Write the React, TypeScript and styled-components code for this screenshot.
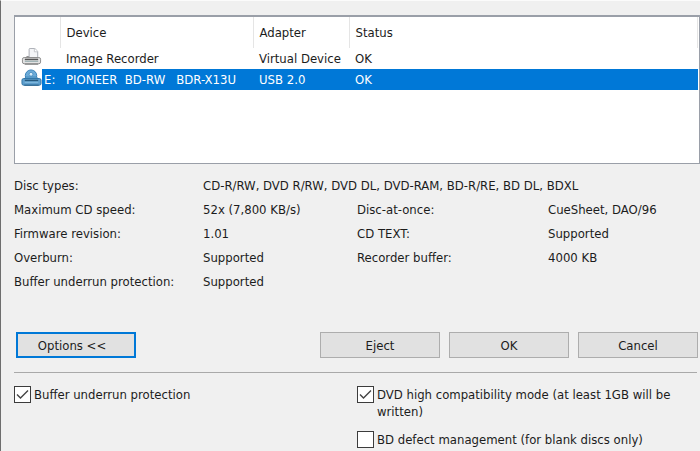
import React, { useId, useState } from "react";
import styled, { createGlobalStyle } from "styled-components";

const GlobalStyle = createGlobalStyle`
  *, *::before, *::after { box-sizing: border-box; }
  body {
    margin: 0;
    background: #f0f0f0;
    color: #1c1c1c;
    font-family: "DejaVu Sans Condensed", "DejaVu Sans", sans-serif;
    font-size: 13px;
    line-height: 17px;
  }
`;

const Dialog = styled.main`
  min-height: 100vh;
  padding: 14px 0 0 13px;
  border-top: 1px solid #fbfbfb;
  border-left: 1px solid #6e6e6e;
`;

const DeviceList = styled.div`
  height: 149px;
  padding-right: 1px;
  border: 1px solid #9a9fa8;
  border-top-width: 2px;
  background: #fff;
`;

const DeviceTable = styled.table`
  width: 100%;
  table-layout: fixed;
  border-collapse: collapse;
`;

const Column = styled.col<{ $width?: number }>`
  width: ${({ $width }) => ($width ? `${$width}px` : "auto")};
`;

const HeadCell = styled.th`
  height: 31px;
  padding: 0 0 0 6px;
  border-right: 1px solid #e5e5e5;
  font-weight: 400;
  text-align: left;
`;

const Cell = styled.td<{ $selected?: boolean }>`
  height: 21px;
  padding: 0 0 0 6px;
  overflow: hidden;
  white-space: pre;
  color: ${({ $selected }) => ($selected ? "#fff" : "inherit")};
  background: ${({ $selected }) => ($selected ? "#0078d7" : "transparent")};
`;

const DriveCell = styled.td`
  height: 21px;
  padding: 0;
`;

const Drive = styled.div`
  display: flex;
  height: 21px;
  padding-left: 6px;
`;

const DriveLetter = styled.span<{ $selected?: boolean }>`
  flex: 1;
  padding-left: 2px;
  line-height: 21px;
  color: #fff;
  background: ${({ $selected }) => ($selected ? "#0078d7" : "transparent")};
`;

const Properties = styled.dl`
  display: grid;
  grid-template-columns: 189fr 154fr 191fr 152fr;
  grid-auto-rows: 24px;
  align-items: center;
  margin: 9px 0 0;
  white-space: nowrap;
`;

const Term = styled.dt`
  grid-column: span 1;
`;

const Value = styled.dd<{ $span?: number }>`
  grid-column: span ${({ $span }) => $span ?? 1};
  margin: 0;
`;

const Actions = styled.div`
  display: flex;
  gap: 9px;
  margin: 39px 2px 0 2px;
`;

const Button = styled.button<{ $primary?: boolean }>`
  flex: 0 0 120px;
  height: 26px;
  margin: ${({ $primary }) => ($primary ? "0 auto 0 0" : "0")};
  padding: 0 ${({ $primary }) => ($primary ? "8px" : "0")} 0 0;
  border: ${({ $primary }) => ($primary ? "2px solid #0078d7" : "1px solid #adadad")};
  background: #e1e1e1;
  color: inherit;
  font: inherit;
`;

const Divider = styled.hr`
  height: 1px;
  margin: 14px 3px 13px 0;
  border: 0;
  background: #a9a9a9;
`;

const Options = styled.div`
  display: grid;
  grid-template-columns: 1fr 1fr;
  align-items: start;
`;

const OptionGroup = styled.div`
  display: grid;
  gap: 11px;
`;

const Option = styled.div`
  display: flex;
  gap: 3px;
  padding-right: 20px;
`;

const CheckFrame = styled.span`
  position: relative;
  flex: 0 0 17px;
  height: 17px;
`;

const CheckInput = styled.input`
  appearance: none;
  display: block;
  width: 17px;
  height: 17px;
  margin: 0;
  border: 1px solid #3c3c3c;
  background: #fff;
`;

const Tick = styled.svg`
  position: absolute;
  inset: 0;
  pointer-events: none;
`;

function PrinterIcon() {
  return (
    <svg width="21" height="20" viewBox="0 0 22 20" aria-hidden="true">
      <path d="M4.5 10.5 6 8.5h10l2.5 2.5" fill="#ddd" stroke="#888" />
      <path d="M8.5 10V1q0-1 1-1h5L17.5 3V10z" fill="#f4f5f7" stroke="#a7abb2" />
      <path d="M14 0v3.500h3.500" fill="#fff" stroke="#b7b9be" strokeWidth=".8" />
      <rect x="1.500" y="9.500" width="19" height="6.500" rx="1.800" fill="#e3e3e3" stroke="#8b8b8b" />
      <path d="M4 11.500h14" stroke="#555" strokeWidth="1.600" />
      <path d="M4 13.500h14" stroke="#9cb0b3" strokeWidth="1.200" />
      <path d="M4 16.500h14" stroke="#777" />
    </svg>
  );
}

function BurnerIcon() {
  return (
    <svg width="21" height="20" viewBox="0 0 22 20" aria-hidden="true">
      <circle cx="10.500" cy="6.500" r="6" fill="#6cabd8" stroke="#3680b8" />
      <circle cx="10.500" cy="5" r="2" fill="#d9edf9" stroke="#3e87bd" strokeWidth=".8" />
      <path d="M3 10.500 5 8h11.500l2 2.500z" fill="#75b0d9" stroke="#337db2" strokeWidth=".8" />
      <rect x="1" y="9.500" width="20" height="7" rx="1.800" fill="#5f9fcd" stroke="#2f73a6" />
      <path d="M4 11.500h14" stroke="#26597e" strokeWidth="1.500" />
      <path d="M4 13.500h14" stroke="#86bee2" />
      <path d="M3.500 16.500h15" stroke="#285f88" />
    </svg>
  );
}

function CheckOption({ text, initial = false }: { text: string; initial?: boolean }) {
  const id = useId();
  const [checked, setChecked] = useState(initial);
  return (
    <Option>
      <CheckFrame>
        <CheckInput
          id={id}
          type="checkbox"
          checked={checked}
          onChange={(event) => setChecked(event.target.checked)}
        />
        {checked && (
          <Tick width="17" height="17" viewBox="0 0 17 17" aria-hidden="true">
            <path d="M3 8.500 6.500 12 14 4.500" fill="none" stroke="#444" strokeWidth="1.400" />
          </Tick>
        )}
      </CheckFrame>
      <label htmlFor={id}>{text}</label>
    </Option>
  );
}

export default function App() {
  return (
    <>
      <GlobalStyle />
      <Dialog>
        <DeviceList>
          <DeviceTable>
            <colgroup>
              <Column $width={45} />
              <Column $width={193} />
              <Column $width={96} />
              <Column />
            </colgroup>
            <thead>
              <tr>
                <HeadCell aria-label="Drive" />
                <HeadCell>Device</HeadCell>
                <HeadCell>Adapter</HeadCell>
                <HeadCell>Status</HeadCell>
              </tr>
            </thead>
            <tbody>
              <tr>
                <DriveCell>
                  <Drive>
                    <PrinterIcon />
                  </Drive>
                </DriveCell>
                <Cell>Image Recorder</Cell>
                <Cell>Virtual Device</Cell>
                <Cell>OK</Cell>
              </tr>
              <tr aria-selected="true">
                <DriveCell>
                  <Drive>
                    <BurnerIcon />
                    <DriveLetter $selected>E:</DriveLetter>
                  </Drive>
                </DriveCell>
                <Cell $selected>{"PIONEER  BD-RW   BDR-X13U"}</Cell>
                <Cell $selected>USB 2.0</Cell>
                <Cell $selected>OK</Cell>
              </tr>
            </tbody>
          </DeviceTable>
        </DeviceList>

        <Properties>
          <Term>Disc types:</Term>
          <Value $span={3}>CD-R/RW, DVD R/RW, DVD DL, DVD-RAM, BD-R/RE, BD DL, BDXL</Value>
          <Term>Maximum CD speed:</Term>
          <Value>52x (7,800 KB/s)</Value>
          <Term>Disc-at-once:</Term>
          <Value>CueSheet, DAO/96</Value>
          <Term>Firmware revision:</Term>
          <Value>1.01</Value>
          <Term>CD TEXT:</Term>
          <Value>Supported</Value>
          <Term>Overburn:</Term>
          <Value>Supported</Value>
          <Term>Recorder buffer:</Term>
          <Value>4000 KB</Value>
          <Term>Buffer underrun protection:</Term>
          <Value $span={3}>Supported</Value>
        </Properties>

        <Actions>
          <Button type="button" $primary>Options &lt;&lt;</Button>
          <Button type="button">Eject</Button>
          <Button type="button">OK</Button>
          <Button type="button">Cancel</Button>
        </Actions>

        <Divider />

        <Options>
          <OptionGroup>
            <CheckOption text="Buffer underrun protection" initial />
          </OptionGroup>
          <OptionGroup>
            <CheckOption text="DVD high compatibility mode (at least 1GB will be written)" initial />
            <CheckOption text="BD defect management (for blank discs only)" />
          </OptionGroup>
        </Options>
      </Dialog>
    </>
  );
}
